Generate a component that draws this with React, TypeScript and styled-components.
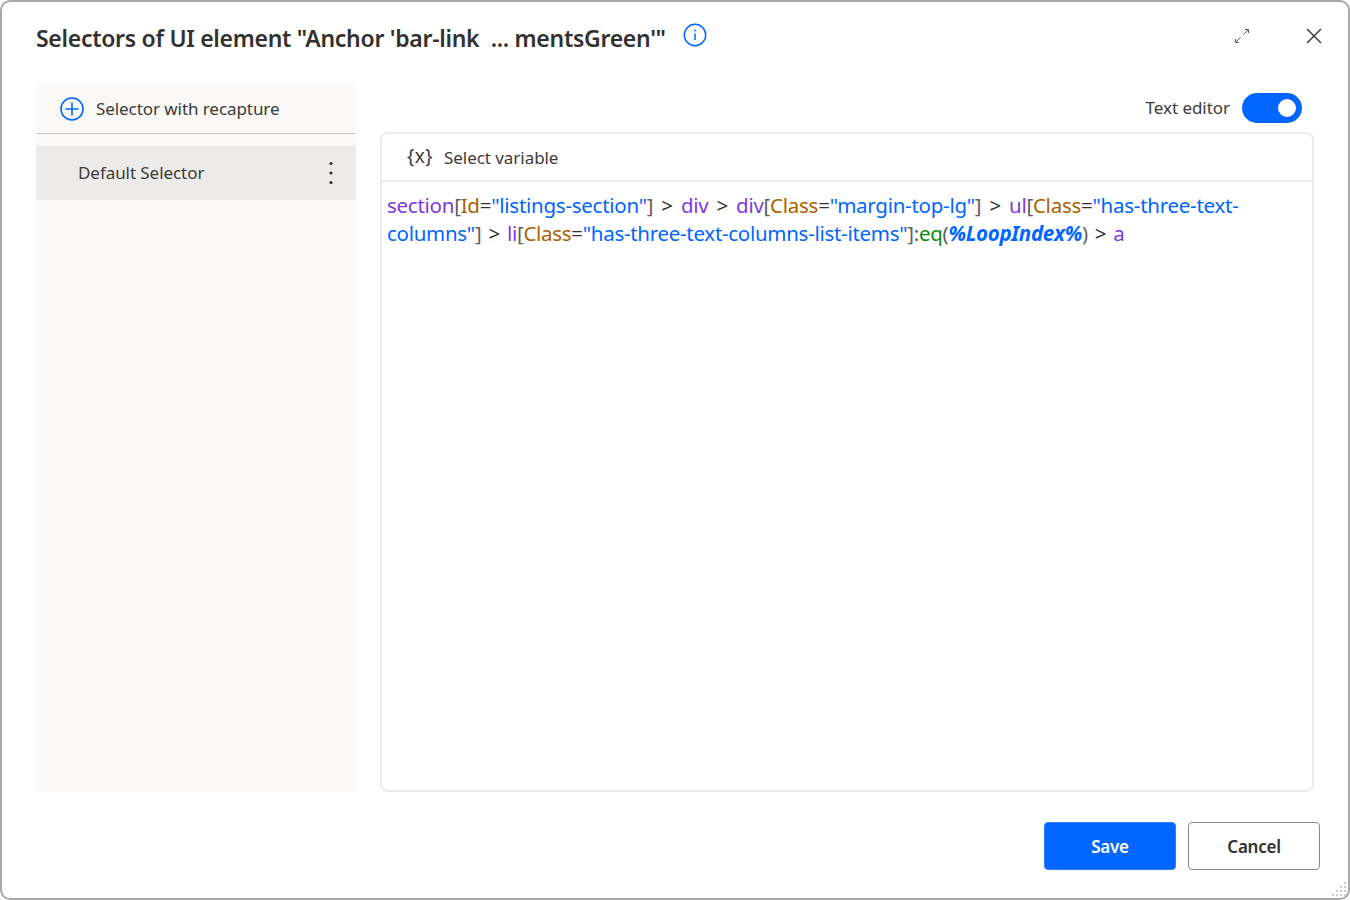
import React from 'react';
import styled, { createGlobalStyle } from 'styled-components';

const GlobalStyle = createGlobalStyle`
  html, body {
    margin: 0;
    padding: 0;
    background: #ffffff;
  }
  * {
    box-sizing: border-box;
  }
`;

const FONT = `'Noto Sans', 'Open Sans', sans-serif`;

const Dialog = styled.div`
  position: relative;
  width: 1350px;
  height: 900px;
  display: flex;
  flex-direction: column;
  background: #ffffff;
  border: 2px solid #a8a8a8;
  border-radius: 10px;
  padding: 0 28px 0 34px;
  font-family: ${FONT};
  color: #323130;
  overflow: hidden;
`;

const Header = styled.header`
  height: 82px;
  display: flex;
  align-items: flex-start;
  padding-top: 19px;
`;

const Title = styled.h1`
  margin: 0;
  font-size: 23px;
  line-height: 34px;
  font-weight: 600;
  color: #323130;
  letter-spacing: -0.29px;
  white-space: pre;
`;

const InfoButton = styled.span`
  display: flex;
  margin: 2px 0 0 17px;
  color: #0066ff;
`;

const WindowActions = styled.div`
  margin-left: auto;
  display: flex;
  align-items: center;
  gap: 55px;
  padding: 6px 0 0;
  margin-right: -3px;
  color: #605e5c;
`;

const IconSlot = styled.span`
  display: flex;
`;

const CloseSlot = styled(IconSlot)`
  color: #323130;
`;

const Body = styled.div`
  height: 708px;
  display: flex;
  gap: 24px;
`;

const Sidebar = styled.aside`
  width: 320px;
  flex: none;
  background: #faf9f8;
  display: flex;
  flex-direction: column;
`;

const AddRow = styled.div`
  height: 50px;
  display: flex;
  align-items: center;
  gap: 12px;
  padding: 0 0 0 24px;
  border-bottom: 1px solid #c8c6c4;
  font-size: 17px;
  letter-spacing: -0.07px;
  color: #3b3a39;
`;

const SelectorItem = styled.div`
  margin-top: 12px;
  height: 54px;
  display: flex;
  align-items: center;
  justify-content: space-between;
  padding: 0 23px 2px 42px;
  background: #edebe9;
  font-size: 17px;
  letter-spacing: -0.06px;
  color: #3b3a39;
`;

const MoreIcon = styled.span`
  display: flex;
  margin-top: 2px;
  color: #323130;
`;

const Main = styled.main`
  flex: 1;
  display: flex;
  flex-direction: column;
  margin-right: 6px;
`;

const EditorToggleRow = styled.div`
  height: 48px;
  display: flex;
  align-items: flex-start;
  justify-content: flex-end;
  gap: 12px;
  padding: 9px 12px 0 0;
  font-size: 17px;
  line-height: 30px;
  letter-spacing: -0.05px;
  color: #3b3a39;
`;

const Toggle = styled.span<{ $on: boolean }>`
  width: 60px;
  height: 30px;
  border-radius: 15px;
  background: ${(p) => (p.$on ? '#0066ff' : '#c8c6c4')};
  display: flex;
  align-items: center;
  justify-content: ${(p) => (p.$on ? 'flex-end' : 'flex-start')};
  padding: 0 6px;

  &::after {
    content: '';
    width: 18px;
    height: 18px;
    border-radius: 50%;
    background: #ffffff;
  }
`;

const EditorPanel = styled.section`
  flex: 1;
  display: flex;
  flex-direction: column;
  border: 2px solid #edebe9;
  border-radius: 8px;
`;

const VariableBar = styled.div`
  height: 48px;
  flex: none;
  display: flex;
  align-items: center;
  gap: 11px;
  padding: 0 0 0 25px;
  border-bottom: 2px solid #edebe9;
  font-size: 17px;
  letter-spacing: -0.05px;
  color: #3b3a39;
`;

const VarGlyph = styled.span`
  font-size: 19px;
  letter-spacing: 0.5px;
  position: relative;
  top: -1px;
`;

const Code = styled.div`
  padding: 9px 0 0 5px;
  font-size: 20.5px;
  line-height: 28px;
  white-space: pre;
`;

const CodeLine = styled.div<{ $tracking: number; $gap: number }>`
  letter-spacing: ${(p) => p.$tracking}px;
  word-spacing: ${(p) => p.$gap}px;
`;

type TokenKind = 'tag' | 'attr' | 'str' | 'punct' | 'fn' | 'op';

const Token = styled.span<{ $kind: TokenKind }>`
  color: ${(p) =>
    ({
      tag: '#7c3ade',
      attr: '#ad5f00',
      str: '#0066ff',
      punct: '#605e5c',
      fn: '#0b8a0b',
      op: '#323130',
    })[p.$kind]};
`;

const VarToken = styled.span`
  color: #0066ff;
  font-weight: 700;
  font-style: italic;
`;

const Footer = styled.footer`
  flex: 1;
  display: flex;
  justify-content: flex-end;
  gap: 12px;
  padding-top: 30px;
`;

const Button = styled.button<{ $primary?: boolean }>`
  width: 132px;
  height: 48px;
  border-radius: 4px;
  border: 1px solid ${(p) => (p.$primary ? '#2f7fff' : '#8a8886')};
  background: ${(p) => (p.$primary ? '#0066ff' : '#ffffff')};
  color: ${(p) => (p.$primary ? '#ffffff' : '#323130')};
  font-family: ${FONT};
  font-size: 17px;
  font-weight: 600;
  letter-spacing: -0.25px;
`;

const Grip = styled.svg`
  position: absolute;
  right: 0;
  bottom: 0;
`;

function Tokens({ items }: { items: Array<[string, TokenKind]> }) {
  return (
    <>
      {items.map(([text, kind], i) => (
        <Token key={i} $kind={kind}>
          {text}
        </Token>
      ))}
    </>
  );
}

export default function App() {
  return (
    <>
      <GlobalStyle />
      <Dialog>
        <Header>
          <Title>{`Selectors of UI element "Anchor 'bar-link  ... mentsGreen'"`}</Title>
          <InfoButton>
            <svg width="24" height="24" viewBox="0 0 24 24" fill="none" stroke="currentColor">
              <circle cx="12" cy="12" r="10.7" strokeWidth="1.5" />
              <path d="M12 10.5v6.5" strokeWidth="1.5" />
              <circle cx="12" cy="7.5" r="0.9" fill="currentColor" stroke="none" />
            </svg>
          </InfoButton>
          <WindowActions>
            <IconSlot>
              <svg width="16" height="16" viewBox="0 0 16 16" fill="none" stroke="currentColor" strokeWidth="1">
                <path d="M9.5 6.5 14.5 1.5M11 1.5H14.5V5M6.5 9.5 1.5 14.5M1.5 11V14.5H5" />
              </svg>
            </IconSlot>
            <CloseSlot>
              <svg width="18" height="18" viewBox="0 0 18 18" fill="none" stroke="currentColor" strokeWidth="1.4">
                <path d="M2 2 16 16M16 2 2 16" />
              </svg>
            </CloseSlot>
          </WindowActions>
        </Header>
        <Body>
          <Sidebar>
            <AddRow>
              <svg width="24" height="24" viewBox="0 0 24 24" fill="none" stroke="#0066ff" strokeWidth="1.6">
                <circle cx="12" cy="12" r="11" />
                <path d="M12 5.5v13M5.5 12h13" />
              </svg>
              Selector with recapture
            </AddRow>
            <SelectorItem>
              Default Selector
              <MoreIcon>
                <svg width="4" height="24" viewBox="0 0 4 24" fill="currentColor">
                  <circle cx="2" cy="2.5" r="1.6" />
                  <circle cx="2" cy="12" r="1.6" />
                  <circle cx="2" cy="21.5" r="1.6" />
                </svg>
              </MoreIcon>
            </SelectorItem>
          </Sidebar>
          <Main>
            <EditorToggleRow>
              Text editor
              <Toggle $on />
            </EditorToggleRow>
            <EditorPanel>
              <VariableBar>
                <VarGlyph>{'{x}'}</VarGlyph>
                Select variable
              </VariableBar>
              <Code>
                <CodeLine $tracking={-0.26} $gap={3}>
                  <Tokens
                    items={[
                      ['section', 'tag'],
                      ['[', 'punct'],
                      ['Id', 'attr'],
                      ['=', 'op'],
                      ['"listings-section"', 'str'],
                      [']', 'punct'],
                      [' > ', 'op'],
                      ['div', 'tag'],
                      [' > ', 'op'],
                      ['div', 'tag'],
                      ['[', 'punct'],
                      ['Class', 'attr'],
                      ['=', 'op'],
                      ['"margin-top-lg"', 'str'],
                      [']', 'punct'],
                      [' > ', 'op'],
                      ['ul', 'tag'],
                      ['[', 'punct'],
                      ['Class', 'attr'],
                      ['=', 'op'],
                      ['"has-three-text-', 'str'],
                    ]}
                  />
                </CodeLine>
                <CodeLine $tracking={-0.29} $gap={2}>
                  <Tokens
                    items={[
                      ['columns"', 'str'],
                      [']', 'punct'],
                      [' > ', 'op'],
                      ['li', 'tag'],
                      ['[', 'punct'],
                      ['Class', 'attr'],
                      ['=', 'op'],
                      ['"has-three-text-columns-list-items"', 'str'],
                      [']:', 'punct'],
                      ['eq', 'fn'],
                      ['(', 'punct'],
                    ]}
                  />
                  <VarToken>%LoopIndex%</VarToken>
                  <Tokens
                    items={[
                      [')', 'punct'],
                      [' > ', 'op'],
                      ['a', 'tag'],
                    ]}
                  />
                </CodeLine>
              </Code>
            </EditorPanel>
          </Main>
        </Body>
        <Footer>
          <Button $primary>Save</Button>
          <Button>Cancel</Button>
        </Footer>
        <Grip width="18" height="18" viewBox="0 0 18 18" fill="#c8ccd4">
          <rect x="14" y="2" width="2" height="2" />
          <rect x="10" y="6" width="2" height="2" />
          <rect x="14" y="6" width="2" height="2" />
          <rect x="6" y="10" width="2" height="2" />
          <rect x="10" y="10" width="2" height="2" />
          <rect x="14" y="10" width="2" height="2" />
          <rect x="2" y="14" width="2" height="2" />
          <rect x="6" y="14" width="2" height="2" />
          <rect x="10" y="14" width="2" height="2" />
          <rect x="14" y="14" width="2" height="2" />
        </Grip>
      </Dialog>
    </>
  );
}
